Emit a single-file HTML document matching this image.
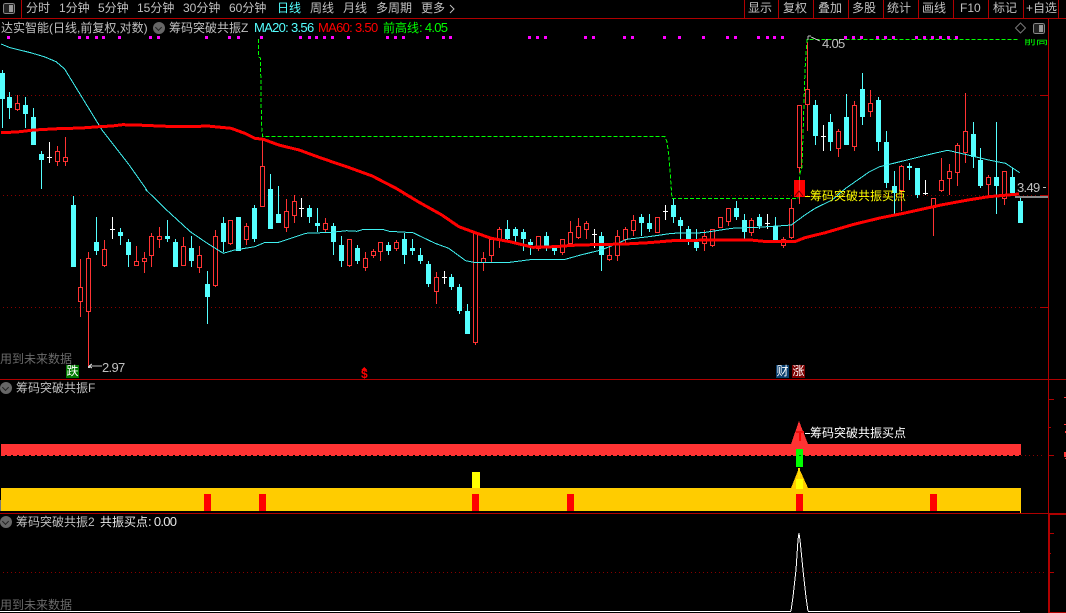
<!DOCTYPE html>
<html><head><meta charset="utf-8"><title>达实智能</title>
<style>
html,body{margin:0;padding:0;background:#000;width:1066px;height:613px;overflow:hidden}
body{position:relative;font:12px/14px "Liberation Sans","WenQuanYi Zen Hei","Noto Sans CJK SC",sans-serif;color:#c0c0c0}
svg{position:absolute;left:0;top:0}
.t{position:absolute;white-space:nowrap;height:14px}
.d{font-size:13px;letter-spacing:-.7px}
.b{position:absolute;width:13px;height:13px;line-height:13px;text-align:center;font-size:12px;color:#fff}
.i{position:absolute;width:12px;height:12px;border-radius:50%;background:#666}
.i:after{content:"";position:absolute;left:3px;top:3px;width:4px;height:4px;border:solid #222;border-width:0 1.5px 1.5px 0;transform:rotate(45deg)}
</style></head><body>
<svg id="s" width="1066" height="613" viewBox="0 0 1066 613" shape-rendering="crispEdges"></svg>

<span class="t" style="left:26px;top:1px">分时</span>
<span class="t" style="left:59px;top:1px">1分钟</span>
<span class="t" style="left:98px;top:1px">5分钟</span>
<span class="t" style="left:137px;top:1px">15分钟</span>
<span class="t" style="left:183px;top:1px">30分钟</span>
<span class="t" style="left:229px;top:1px">60分钟</span>
<span class="t" style="left:277px;top:1px;color:#55ffff">日线</span>
<span class="t" style="left:310px;top:1px">周线</span>
<span class="t" style="left:343px;top:1px">月线</span>
<span class="t" style="left:376px;top:1px">多周期</span>
<span class="t" style="left:421px;top:1px">更多</span>
<span class="t" style="left:748px;top:1px">显示</span>
<span class="t" style="left:783px;top:1px">复权</span>
<span class="t" style="left:818px;top:1px">叠加</span>
<span class="t" style="left:852px;top:1px">多股</span>
<span class="t" style="left:887px;top:1px">统计</span>
<span class="t" style="left:922px;top:1px">画线</span>
<span class="t" style="left:960px;top:1px">F10</span>
<span class="t" style="left:993px;top:1px">标记</span>
<span class="t" style="left:1026px;top:1px">+自选</span>

<span class="t" style="left:1px;top:21px">达实智能(日线,前复权,对数)</span>
<span class="i" style="left:153px;top:22px"></span>
<span class="t" style="left:169px;top:21px">筹码突破共振Z</span>
<span class="t d" style="left:254px;top:21px;color:#55ffff">MA20: 3.56</span>
<span class="t d" style="left:318px;top:21px;color:#ff0000">MA60: 3.50</span>
<span class="t" style="left:383px;top:21px;color:#00ff00">前高线<span class="d">: 4.05</span></span>

<div style="position:absolute;left:1024px;top:39px;width:24px;height:7px;overflow:hidden"><span class="t" style="left:0;top:-6px;color:#00ff00">前高</span></div>
<span class="t d" style="left:822px;top:37px">4.05</span>
<span class="t d" style="left:102px;top:361px">2.97</span>
<span class="t d" style="left:1017px;top:181px">3.49</span>
<span class="t" style="left:810px;top:189px;color:#ffff00">筹码突破共振买点</span>
<span class="t" style="left:0;top:352px;color:#6a6a6a">用到未来数据</span>
<span class="t" style="left:0;top:598px;color:#6a6a6a">用到未来数据</span>

<span class="b" style="left:66px;top:365px;background:#007a00">跌</span>
<span class="b" style="left:776px;top:365px;background:#0a3f6e">财</span>
<span class="b" style="left:792px;top:365px;background:#7a0000">涨</span>
<span class="t" style="left:361px;top:367px;color:#ff0000;font-size:12px;font-weight:bold">$</span>

<span class="i" style="left:0;top:382px"></span>
<span class="t" style="left:16px;top:381px">筹码突破共振F</span>
<span class="t" style="left:810px;top:426px;color:#fff">筹码突破共振买点</span>
<span class="i" style="left:0;top:516px"></span>
<span class="t" style="left:16px;top:515px">筹码突破共振2</span>
<span class="t" style="left:100px;top:515px;color:#e8e8e8">共振买点<span class="d">: 0.00</span></span>

<script>
var o=[];
function R(x,y,w,h,c){o.push('<rect x="'+x+'" y="'+y+'" width="'+w+'" height="'+h+'" fill="'+c+'"/>')}
function P(p,c,w,e){o.push('<polyline fill="none" points="'+p.map(function(a){return a[0].toFixed(1)+','+a[1].toFixed(1)}).join(' ')+'" stroke="'+c+'" stroke-width="'+w+'"'+(e||'')+'/>')}
var L='#b00000';
/* frame */
R(0,18,1066,1,L);R(0,379,1066,1,L);R(0,513,1066,1,L);R(1048,19,1,594,L);
R(1049,514,1,99,L);R(1049,514,17,1,L);R(1049,612,17,1,L);
R(21,0,1,18,L);
[744,778,813,848,883,918,953,988,1023,1058].forEach(function(x){R(x,0,1,18,L)});
[[1040,95],[1040,195],[1040,307],[1049,399],[1049,455],[1049,533],[1049,572]].forEach(function(a){R(a[0],a[1],a[0]==1040?8:5,1,L)});
R(1049,427,2,1,L);R(1049,553,2,1,L);
[[1064,397,2,1],[1064,424,2,1],[1065,431,1,2],[1064,452,2,5],[1065,458,1,1]].forEach(function(a){R(a[0],a[1],a[2],a[3],'#ff3333')});
/* right icons */
o.push('<rect x="3.5" y="3.5" width="11" height="10" rx="2" fill="#222" stroke="#888"/><rect x="9" y="5" width="4" height="7" fill="#999"/>');
o.push('<rect x="1033.5" y="23.5" width="11" height="10" rx="2" fill="#222" stroke="#888"/><rect x="1039" y="25" width="4" height="7" fill="#999"/>');
o.push('<path d="M1020.5 23l5 5-5 5-5-5z" fill="none" stroke="#777" shape-rendering="auto"/>');
o.push('<path d="M450 5l4 4-4 4" fill="none" stroke="#c0c0c0" shape-rendering="auto"/>');
/* dotted grid */
function D(y,a,b,c){for(var x=a;x<b;x+=4)R(x,y,1,1,c||'#880000')}
D(95,3,1038);D(195,3,1038);D(307,3,1038);D(455,1021,1044);D(572,3,1044);
/* magenta */
[25,233,257,281,304,351,442,466,607,675,699,769,884,908,931,954,978,1025,1140,1163,1187,1257,1304,1325,1557].forEach(function(z){R(Math.round(z/2.942)-1,36,3,3,'#ff00ff')});
[13,36,154,177,269,292,386,431,501,572,595,663,687,710,734,919,942,966,1013,1037,1060,1128,1151,1175,1198,1222,1245].forEach(function(z){R(Math.round(533+z/2.942)-1,36,3,3,'#ff00ff')});
/* candles: type,high,top,bottom,low */
var C="c70,73,99,128 c92,97,108,119 r95,103,109,111 c97,105,114,128 c108,117,145,145 c151,154,160,189 w142,157,157,163 r146,151,161,166 r137,157,161,166 c196,205,267,267 r259,287,301,317 r252,258,311,366 c217,242,251,255 r240,249,265,267 w217,229,229,239 c228,232,236,245 c239,242,255,267 r246,261,265,265 r252,258,261,273 r233,236,255,267 r227,236,239,248 c220,236,239,242 c239,242,267,267 r237,246,265,265 c236,248,261,267 r246,255,267,273 c271,284,297,324 r230,236,285,287 c217,223,242,252 r220,220,243,245 c217,217,251,251 r223,226,239,245 c205,208,239,242 r138,166,206,206 c174,189,229,229 c186,214,223,223 r199,211,227,232 r195,201,215,223 w198,208,208,217 c205,208,217,223 c208,223,226,232 r218,223,229,232 c223,226,242,255 c236,245,261,267 r239,239,265,267 c245,248,261,264 r252,258,267,271 r249,251,255,258 r242,242,251,261 c242,245,251,255 r240,242,248,251 c233,239,255,264 c239,248,251,255 c248,255,261,264 c261,264,284,287 r272,277,291,304 w271,277,277,284 c274,277,287,290 c284,287,311,314 c304,311,334,334 r233,233,342,345 r252,258,262,271 r237,239,255,263 r227,229,239,248 c220,229,239,242 c227,229,236,242 c229,232,239,251 c239,242,245,255 r236,236,248,251 c232,236,246,251 c248,248,251,255 r239,239,252,255 r221,232,243,243 r218,226,237,239 r221,223,229,239 w229,234,234,248 c232,236,255,271 r243,255,259,261 r230,236,255,261 r227,229,239,245 r215,220,230,236 c214,217,223,236 c214,223,229,232 r217,217,232,232 w205,211,211,220 c198,205,217,223 c217,220,226,239 c226,229,239,245 c229,242,248,251 r230,236,243,251 r229,229,245,247 r217,217,227,227 r208,208,221,226 c201,208,217,220 c214,220,232,239 r218,220,232,236 c214,217,226,229 w214,223,223,229 c217,226,241,241 r237,239,245,248 r199,208,237,239 r105,105,167,173 r42,89,104,131 c100,105,136,145 w125,136,136,151 c114,122,142,151 r129,131,148,157 c94,117,145,145 r101,105,146,151 c73,89,117,125 r90,103,111,117 c97,100,142,151 c131,142,183,188 c171,186,193,214 r165,166,190,211 c163,166,168,180 c168,168,195,198 w180,193,193,195 r198,198,207,236 r158,180,190,192 r164,171,178,195 r143,145,172,186 r93,131,152,163 c122,134,157,168 c148,160,186,188 r175,177,184,195 c122,177,186,214 r171,171,198,205 c168,177,193,195 c197,201,223,223".split(' ');
var CY='#55ffff',RD='#ff3333';
C.forEach(function(s,i){
 var t=s[0],v=s.slice(1).split(',').map(Number),x=i==0?2:Math.floor(1.95+7.895*i);
 var col=t=='c'?CY:t=='r'?RD:'#ffffff';
 R(x,v[0],1,v[3]-v[0],col);
 if(t=='c')R(x-2,v[1],5,Math.max(v[2]-v[1],1),col);
 else if(t=='w')R(x-2,v[1],5,1,col);
 else{R(x-2,v[1],5,v[2]-v[1]+1,col);R(x-1,v[1]+1,3,Math.max(v[2]-v[1]-1,0),'#000')}
});
/* lines */
function a(l){return l.map(function(p){return[p[0]/2.942,p[1]/3]})}
function b(l){return l.map(function(p){return[533+p[0]/2.942,p[1]/3]})}
function c3(l){return l.map(function(p){return[p[0]/2.942,190+p[1]/3]})}
function c4(l){return l.map(function(p){return[533+p[0]/2.942,190+p[1]/3]})}
var m20=a([[3,132],[30,143],[90,158],[130,170],[165,185],[190,207],[240,290],[300,390],[380,495],[432,570]]).concat(c3([[430,0],[490,60],[560,125],[610,160],[657,190],[690,180],[750,170],[780,157],[820,157],[870,140],[900,130],[975,127],[1020,122],[1050,124],[1070,118],[1125,118],[1145,124],[1215,128],[1280,160],[1320,175],[1370,212],[1400,218],[1500,217]])).concat(c4([[0,208],[95,208],[140,195],[200,180],[250,160],[275,148],[340,140],[410,130],[500,128],[585,115],[660,112],[720,108],[760,105],[800,75],[830,55],[880,30]])).concat(b([[920,565],[990,515],[1020,500],[1100,480],[1180,460],[1220,451],[1280,465],[1340,480],[1390,490],[1432,518]]));
P(m20,'#40f0f0',1);
var m60=a([[3,398],[50,396],[100,390],[170,386],[240,384],[290,380],[330,378],[360,374],[400,375],[490,379],[560,380],[610,378],[680,385],[720,400],[750,415],[775,418],[820,435],[880,450],[950,476],[1020,500],[1095,528],[1165,565]]).concat(c3([[1230,35],[1300,75],[1350,110],[1390,125],[1445,145],[1500,155]])).concat(c4([[0,172],[60,170],[133,165],[270,162],[340,158],[410,152],[530,150],[640,150],[690,155],[770,155],[800,143],[860,128],[940,104],[1020,84],[1090,70],[1200,45],[1280,30],[1340,20],[1430,12]]));
P(m60,'#ff0000',3);
/* green dashed */
var dash=' stroke-dasharray="4 2"';
P([[258.5,39],[258.5,57],[260.5,58],[261.5,125],[262.5,136.5],[665,136.5],[667,142],[669,157],[672,198.5],[798,198.5],[800,173],[802,167],[805,70],[807,39.5],[1019,39.5]],'#00ff00',1,dash);
/* buy marker */
R(794,180,11,17,'#ff0000');R(799,180,1,24,'#ff3333');
o.push('<path d="M795 196l4-5 4 5" fill="none" stroke="#660000" shape-rendering="auto"/>');
R(805,196,5,1,'#ffff00');
/* arrows */
o.push('<path d="M89 366h13M89 366l3-2M89 366l3 2" stroke="#c0c0c0" fill="none"/>');
R(88,366,2,2,'#ccc');
o.push('<path d="M808 36h3M811 37l9 4M808 36v4" stroke="#c0c0c0" fill="none"/>');
R(1043,187,3,1,'#c0c0c0');
R(1015,196,33,2,'#888888');
/* $ marker top */
o.push('<path d="M364 367l3 3h-6z" fill="#ff0000"/>');
/* panel 2 */
R(1,444,1020,11,RD);for(var x=1;x<1021;x+=6)R(x,455,4,1,RD);
R(0,500,1,11,'#777');
R(1,488,1020,23,'#ffcc00');R(1020,511,1,2,'#ffcc00');
[204,259,472,567,796,930].forEach(function(x){R(x,494,7,17,'#ff0000')});
R(472,472,8,16,'#ffff00');
o.push('<path d="M799 421L808 444H791Z" fill="'+RD+'"/>');
R(799,431,2,10,'#ff0000');R(796,431,8,2,'#ee1111');
R(796,449,7,18,'#00ff00');R(799,455,2,1,'#006600');
o.push('<path d="M799 468L808 488H791Z" fill="#ffcc00"/>');
R(796,479,7,10,'#ffff00');R(798,468,2,11,'#ffdd00');
R(805,433,5,1,'#ffffff');
/* panel 3 */
R(0,611,791,1,'#ffffff');R(808,611,212,1,'#ffffff');
P([[791,611],[793,597],[796,570],[798,540],[799,533],[800,540],[803,570],[806,597],[808,611]],'#ffffff',1);
document.getElementById('s').innerHTML=o.join('');
</script>
</body></html>
